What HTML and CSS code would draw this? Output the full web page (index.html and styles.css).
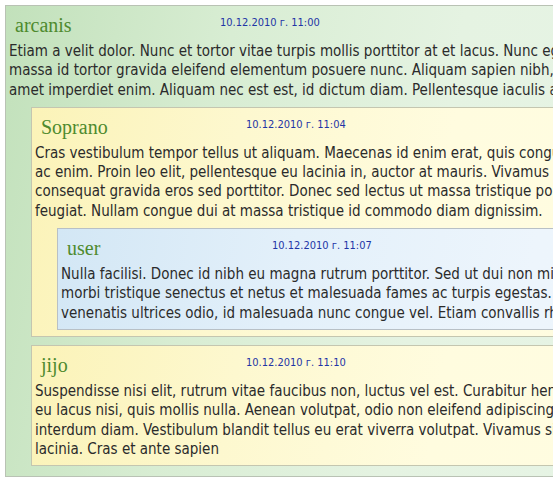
FILE: index.html
```html
<!DOCTYPE html>
<html>
<head>
<meta charset="utf-8">
<link rel="stylesheet" href="styles.css">
</head>
<body>
<div class="thread">
  <div class="comment green">
    <div class="head"><span class="name">arcanis</span><span class="date">10.12.2010 г. 11:00</span></div>
    <p class="text">Etiam a velit dolor. Nunc et tortor vitae turpis mollis porttitor at et lacus. Nunc egestas<br>massa id tortor gravida eleifend elementum posuere nunc. Aliquam sapien nibh, sit<br>amet imperdiet enim. Aliquam nec est est, id dictum diam. Pellentesque iaculis arcu.</p>
    <div class="replies">
      <div class="comment yellow">
        <div class="head"><span class="name">Soprano</span><span class="date">10.12.2010 г. 11:04</span></div>
        <p class="text">Cras vestibulum tempor tellus ut aliquam. Maecenas id enim erat, quis congue<br>ac enim. Proin leo elit, pellentesque eu lacinia in, auctor at mauris. Vivamus<br>consequat gravida eros sed porttitor. Donec sed lectus ut massa tristique porta<br>feugiat. Nullam congue dui at massa tristique id commodo diam dignissim.</p>
        <div class="replies">
          <div class="comment blue">
            <div class="head"><span class="name">user</span><span class="date">10.12.2010 г. 11:07</span></div>
            <p class="text">Nulla facilisi. Donec id nibh eu magna rutrum porttitor. Sed ut dui non mi<br>morbi tristique senectus et netus et malesuada fames ac turpis egestas.<br>venenatis ultrices odio, id malesuada nunc congue vel. Etiam convallis rhoncus</p>
          </div>
        </div>
      </div>
      <div class="comment yellow">
        <div class="head"><span class="name">jijo</span><span class="date">10.12.2010 г. 11:10</span></div>
        <p class="text">Suspendisse nisi elit, rutrum vitae faucibus non, luctus vel est. Curabitur hendrerit<br>eu lacus nisi, quis mollis nulla. Aenean volutpat, odio non eleifend adipiscing, at<br>interdum diam. Vestibulum blandit tellus eu erat viverra volutpat. Vivamus sit<br>lacinia. Cras et ante sapien</p>
      </div>
    </div>
  </div>
</div>
</body>
</html>
```
FILE: styles.css
```css
html, body {
  margin: 0;
  padding: 0;
  background: #ffffff;
  overflow: hidden;
}
body {
  font-family: "DejaVu Sans Condensed", "DejaVu Sans", sans-serif;
  font-size: 15px;
  color: #2b2b2b;
}
.thread {
  padding: 5px 0 0 5px;
  width: 840px;
}
.comment {
  border: 1px solid #b9c2b4;
  padding: 0 0 6px 3px;
}
.green {
  background: linear-gradient(100deg, #c2e1bb 0%, #d8edd3 25%, #e5f3e2 50%, #e8f5e8 100%);
  padding-bottom: 10px;
}
.yellow {
  background: linear-gradient(100deg, #fbf3b8 0%, #fdf8cf 25%, #fffcdf 50%, #fffde3 100%);
  border-color: #c4c6b0;
}
.blue {
  background: linear-gradient(100deg, #d3e7f5 0%, #e3f0fa 30%, #edf5fc 60%, #eef6fc 100%);
  border-color: #b8c0c6;
}
.head {
  display: flex;
  align-items: flex-start;
  height: 36px;
}
.name {
  flex: 0 0 211px;
  box-sizing: border-box;
  padding: 7px 0 0 6px;
  font-family: "Liberation Serif", serif;
  font-size: 20px;
  line-height: 24px;
  color: #4e8a2e;
}
.date {
  padding-top: 10px;
  font-size: 11px;
  line-height: 14px;
  color: #1f35a6;
}
.text {
  margin: 0;
  line-height: 19.3px;
  white-space: nowrap;
}
.replies {
  display: flex;
  flex-direction: column;
  gap: 8px;
  margin: 7px 0 0 22px;
}
```
